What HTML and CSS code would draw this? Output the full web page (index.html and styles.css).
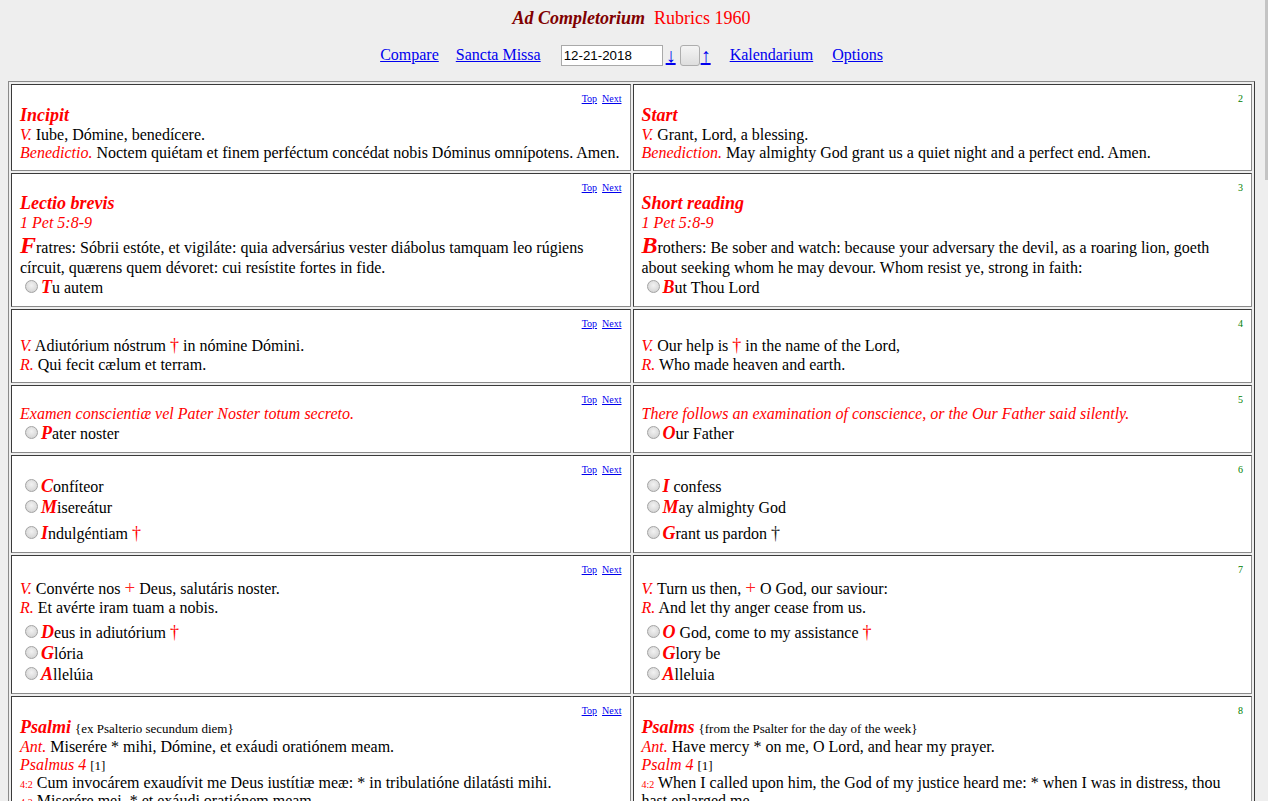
FILE: index.html
```html
<!DOCTYPE html>
<html lang="la">
<head>
<meta charset="utf-8">
<title>Ad Completorium</title>
<link rel="stylesheet" href="styles.css">
</head>
<body>
<div class="page">
  <div class="title"><b class="office">Ad Completorium</b>&nbsp; <span class="rubrics">Rubrics 1960</span></div>
  <div class="nav">
    <a href="#" class="navlink">Compare</a>
    <a href="#" class="navlink missa">Sancta Missa</a>
    <span class="datebox">
      <input type="text" class="date" value="12-21-2018">
      <a href="#" class="arrow">↓</a>
      <button class="go" type="button"></button>
      <a href="#" class="arrow up">↑</a>
    </span>
    <a href="#" class="navlink">Kalendarium</a>
    <a href="#" class="navlink">Options</a>
  </div>

  <div class="office-grid">
    <!-- 1 -->
    <div class="cell">
      <div class="tn"><a href="#">Top</a>&nbsp;&nbsp;<a href="#">Next</a></div>
      <span class="h">Incipit</span><br>
      <span class="ri">V.</span> Iube, Dómine, benedícere.<br>
      <span class="ri">Benedictio.</span> Noctem quiétam et finem perféctum concédat nobis Dóminus omnípotens. Amen.
    </div>
    <div class="cell">
      <div class="tn"><span class="num">2</span></div>
      <span class="h">Start</span><br>
      <span class="ri">V.</span> Grant, Lord, a blessing.<br>
      <span class="ri">Benediction.</span> May almighty God grant us a quiet night and a perfect end. Amen.
    </div>

    <!-- 2 -->
    <div class="cell">
      <div class="tn"><a href="#">Top</a>&nbsp;&nbsp;<a href="#">Next</a></div>
      <span class="h">Lectio brevis</span><br>
      <span class="ri">1 Pet 5:8-9</span><br>
      <span class="big">F</span>ratres: Sóbrii estóte, et vigiláte: quia adversárius vester diábolus tamquam leo rúgiens círcuit, quærens quem dévoret: cui resístite fortes in fide.<br>
      <input type="radio" class="rb"><span class="cap">T</span>u autem
    </div>
    <div class="cell">
      <div class="tn"><span class="num">3</span></div>
      <span class="h">Short reading</span><br>
      <span class="ri">1 Pet 5:8-9</span><br>
      <span class="big">B</span>rothers: Be sober and watch: because your adversary the devil, as a roaring lion, goeth about seeking whom he may devour. Whom resist ye, strong in faith:<br>
      <input type="radio" class="rb"><span class="cap">B</span>ut Thou Lord
    </div>

    <!-- 3 -->
    <div class="cell">
      <div class="tn"><a href="#">Top</a>&nbsp;&nbsp;<a href="#">Next</a></div>
      <span class="ri">V.</span> Adiutórium nóstrum <span class="dag">†</span> in nómine Dómini.<br>
      <span class="ri">R.</span> Qui fecit cælum et terram.
    </div>
    <div class="cell">
      <div class="tn"><span class="num">4</span></div>
      <span class="ri">V.</span> Our help is <span class="dag">†</span> in the name of the Lord,<br>
      <span class="ri">R.</span> Who made heaven and earth.
    </div>

    <!-- 4 -->
    <div class="cell">
      <div class="tn"><a href="#">Top</a>&nbsp;&nbsp;<a href="#">Next</a></div>
      <span class="ri">Examen conscientiæ vel Pater Noster totum secreto.</span><br>
      <input type="radio" class="rb"><span class="cap">P</span>ater noster
    </div>
    <div class="cell">
      <div class="tn"><span class="num">5</span></div>
      <span class="ri">There follows an examination of conscience, or the Our Father said silently.</span><br>
      <input type="radio" class="rb"><span class="cap">O</span>ur Father
    </div>

    <!-- 5 -->
    <div class="cell">
      <div class="tn"><a href="#">Top</a>&nbsp;&nbsp;<a href="#">Next</a></div>
      <input type="radio" class="rb"><span class="cap">C</span>onfíteor<br>
      <input type="radio" class="rb"><span class="cap">M</span>isereátur<br>
      <input type="radio" class="rb"><span class="cap">I</span>ndulgéntiam <span class="dag">†</span>
    </div>
    <div class="cell">
      <div class="tn"><span class="num">6</span></div>
      <input type="radio" class="rb"><span class="cap">I</span> confess<br>
      <input type="radio" class="rb"><span class="cap">M</span>ay almighty God<br>
      <input type="radio" class="rb"><span class="cap">G</span>rant us pardon <span class="dag dark">†</span>
    </div>

    <!-- 6 -->
    <div class="cell">
      <div class="tn"><a href="#">Top</a>&nbsp;&nbsp;<a href="#">Next</a></div>
      <span class="ri">V.</span> Convérte nos <span class="plus">+</span> Deus, salutáris noster.<br>
      <span class="ri">R.</span> Et avérte iram tuam a nobis.<br>
      <input type="radio" class="rb"><span class="cap">D</span>eus in adiutórium <span class="dag">†</span><br>
      <input type="radio" class="rb"><span class="cap">G</span>lória<br>
      <input type="radio" class="rb"><span class="cap">A</span>llelúia
    </div>
    <div class="cell">
      <div class="tn"><span class="num">7</span></div>
      <span class="ri">V.</span> Turn us then, <span class="plus">+</span> O God, our saviour:<br>
      <span class="ri">R.</span> And let thy anger cease from us.<br>
      <input type="radio" class="rb"><span class="cap">O</span> God, come to my assistance <span class="dag">†</span><br>
      <input type="radio" class="rb"><span class="cap">G</span>lory be<br>
      <input type="radio" class="rb"><span class="cap">A</span>lleluia
    </div>

    <!-- 7 -->
    <div class="cell">
      <div class="tn"><a href="#">Top</a>&nbsp;&nbsp;<a href="#">Next</a></div>
      <span class="h">Psalmi</span> <span class="sm">{ex Psalterio secundum diem}</span><br>
      <span class="ri">Ant.</span> Miserére * mihi, Dómine, et exáudi oratiónem meam.<br>
      <span class="ri">Psalmus 4</span> <span class="sm">[1]</span><br>
      <span class="vn">4:2</span> Cum invocárem exaudívit me Deus iustítiæ meæ: * in tribulatióne dilatásti mihi.<br>
      <span class="vn">4:2</span> Miserére mei, * et exáudi oratiónem meam.<br>
      <span class="vn">4:3</span> Fílii hóminum, úsquequo gravi corde? * ut quid dilígitis vanitátem, et quǽritis mendácium?<br>
      <span class="vn">4:4</span> Et scitóte quóniam mirificávit Dóminus sanctum suum: * Dóminus exáudiet me cum clamávero ad eum.
    </div>
    <div class="cell">
      <div class="tn"><span class="num">8</span></div>
      <span class="h">Psalms</span> <span class="sm">{from the Psalter for the day of the week}</span><br>
      <span class="ri">Ant.</span> Have mercy * on me, O Lord, and hear my prayer.<br>
      <span class="ri">Psalm 4</span> <span class="sm">[1]</span><br>
      <span class="vn">4:2</span> When I called upon him, the God of my justice heard me: * when I was in distress, thou hast enlarged me.<br>
      <span class="vn">4:2</span> Have mercy on me: * and hear my prayer.<br>
      <span class="vn">4:3</span> O ye sons of men, how long will you be dull of heart? * why do you love vanity, and seek after lying?<br>
      <span class="vn">4:4</span> Know ye also that the Lord hath made his holy one wonderful: * the Lord will hear me when I shall cry unto him.
    </div>
  </div>
</div>
<div class="scroll-thumb" aria-hidden="true"></div>
</body>
</html>
```

FILE: styles.css
```css
html {
  background: #eeeeee;
}

body {
  margin: 8px;
  font-family: "Liberation Serif", "Times New Roman", serif;
  font-size: 16px;
  color: #000000;
}

a {
  color: #0000ee;
}

.page {
  width: 1247px;
}

/* ---------- header ---------- */
.title {
  text-align: center;
  font-size: 18px;
  line-height: 21px;
  height: 21px;
}

.office {
  color: #800000;
  font-weight: bold;
  font-style: italic;
}

.rubrics {
  color: #ff0000;
}

.nav {
  display: flex;
  justify-content: center;
  align-items: center;
  gap: 19px;
  height: 22px;
  margin-top: 15px;
}

.missa {
  margin-left: -2px;
  margin-right: 1px;
}

.datebox {
  display: flex;
  align-items: center;
  gap: 4px;
}

.date {
  box-sizing: border-box;
  width: 102px;
  height: 21px;
  margin: 0 -1px 0 0;
  padding: 1px 2px;
  border: 1px solid #a9a9a9;
  background: #ffffff;
  font-family: "Liberation Sans", Arial, sans-serif;
  font-size: 13.33px;
  color: #000000;
}

.arrow {
  font-size: 20px;
  line-height: 20px;
}

.arrow.up {
  margin-left: -3px;
}

.go {
  box-sizing: border-box;
  width: 20px;
  height: 21px;
  padding: 0;
  border: 1px solid #adadad;
  border-radius: 3px;
  background: linear-gradient(#f4f4f4, #dedede);
}

/* ---------- office table ---------- */
.office-grid {
  display: grid;
  grid-template-columns: 1fr 1fr;
  gap: 2px;
  padding: 2px;
  margin-top: 15px;
  border: 1px solid;
  border-color: #8a8a8a #3a3a3a #3a3a3a #8a8a8a;
}

.cell {
  background: #ffffff;
  border: 1px solid;
  border-color: #3a3a3a #8a8a8a #8a8a8a #3a3a3a;
  padding: 8px;
}

.tn {
  text-align: right;
  font-size: 10px;
  line-height: 11.5px;
}

.num {
  color: #008000;
}

.h {
  color: #ff0000;
  font-weight: bold;
  font-style: italic;
  font-size: 18px;
}

.ri {
  color: #ff0000;
  font-style: italic;
}

.big {
  color: #ff0000;
  font-weight: bold;
  font-style: italic;
  font-size: 24px;
}

.cap {
  color: #ff0000;
  font-weight: bold;
  font-style: italic;
  font-size: 18px;
}

.dag {
  display: inline-block;
  padding-top: 5px;
  font-size: 18px;
  color: #ff0000;
}

.dag.dark {
  color: #222222;
}

.plus {
  display: inline-block;
  padding-top: 2px;
  font-size: 19px;
  color: #ff2020;
}

.sm {
  font-size: 13px;
}

.vn {
  font-size: 10px;
  color: #ff0000;
}

.rb {
  -webkit-appearance: none;
  appearance: none;
  box-sizing: border-box;
  width: 13px;
  height: 13px;
  margin: 3px 3px 0 5px;
  border: 1px solid #a3a3a3;
  border-radius: 50%;
  background: radial-gradient(circle at 50% 40%, #f2f2f2 0%, #dcdcdc 60%, #c9c9c9 100%);
  vertical-align: baseline;
}

.scroll-thumb {
  position: fixed;
  top: 0;
  right: 0;
  width: 3px;
  height: 180px;
  background: #c4c4c4;
}
```
